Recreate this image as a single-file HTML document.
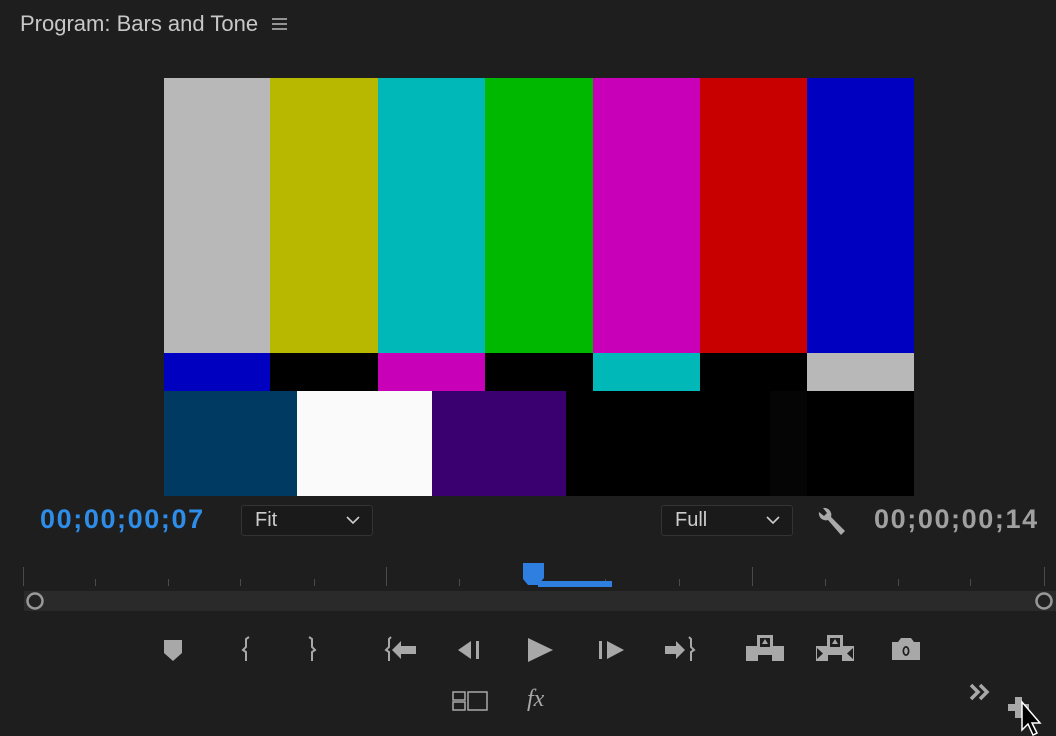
<!DOCTYPE html>
<html><head><style>
body{margin:0;width:1056px;height:736px;background:#1e1e1e;overflow:hidden;position:relative;font-family:"Liberation Sans",sans-serif}
.a{position:absolute}
.title{left:20px;top:11px;color:#c8c8c8;font-size:22px}
.tc{font-family:"Liberation Sans Narrow","Liberation Sans",sans-serif;font-weight:bold;font-size:27px;top:504px;letter-spacing:1.6px}
.dd{top:505px;height:31px;border:1px solid #333;background:#1a1a1a;border-radius:3px;color:#ccc;font-size:20px;box-sizing:border-box;padding:3px 0 0 13px}
.tk{background:#4a4a4a;width:1px}
svg{position:absolute}
</style></head><body>
<div class="a title">Program: Bars and Tone</div>
<svg style="left:271px;top:17px" width="18" height="14"><path d="M1 2H16M1 7H16M1 12H16" stroke="#bbb" stroke-width="1.6"/></svg>

<div class="a" style="left:164px;top:78px;width:750px;height:418px;background:#000">
<div class="a" style="left:0;top:0;width:106px;height:275px;background:#b8b8b8"></div>
<div class="a" style="left:106px;top:0;width:108px;height:275px;background:#b8b800"></div>
<div class="a" style="left:214px;top:0;width:107px;height:275px;background:#00b8b8"></div>
<div class="a" style="left:321px;top:0;width:108px;height:275px;background:#00b800"></div>
<div class="a" style="left:429px;top:0;width:107px;height:275px;background:#c800b8"></div>
<div class="a" style="left:536px;top:0;width:107px;height:275px;background:#c80000"></div>
<div class="a" style="left:643px;top:0;width:107px;height:275px;background:#0000c0"></div>
<div class="a" style="left:0;top:275px;width:106px;height:38px;background:#0000c0"></div>
<div class="a" style="left:214px;top:275px;width:107px;height:38px;background:#c800b8"></div>
<div class="a" style="left:429px;top:275px;width:107px;height:38px;background:#00b8b8"></div>
<div class="a" style="left:643px;top:275px;width:107px;height:38px;background:#b8b8b8"></div>
<div class="a" style="left:0;top:313px;width:133px;height:105px;background:#003a62"></div>
<div class="a" style="left:133px;top:313px;width:135px;height:105px;background:#fafafa"></div>
<div class="a" style="left:268px;top:313px;width:134px;height:105px;background:#3a0070"></div>
<div class="a" style="left:606px;top:313px;width:37px;height:105px;background:#050505"></div>
</div>

<div class="a tc" style="left:40px;color:#2e8de8">00;00;00;07</div>
<div class="a dd" style="left:241px;width:132px">Fit</div>
<svg style="left:346px;top:516px" width="14" height="9"><path d="M1 1L7 7L13 1" stroke="#ccc" stroke-width="1.6" fill="none"/></svg>
<div class="a dd" style="left:661px;width:132px">Full</div>
<svg style="left:766px;top:516px" width="14" height="9"><path d="M1 1L7 7L13 1" stroke="#ccc" stroke-width="1.6" fill="none"/></svg>
<svg style="left:816px;top:505px" width="32" height="32"><path d="M3 7 A7 7 0 0 0 12 15 L25 30 L29 26 L15 12 A7 7 0 0 0 7 3 L11 8 L8 11 Z" fill="#aaa"/></svg>
<div class="a tc" style="left:874px;color:#a0a0a0">00;00;00;14</div>

<div class="a tk" style="left:23px;top:567px;height:19px"></div>
<div class="a tk" style="left:386px;top:567px;height:19px"></div>
<div class="a tk" style="left:752px;top:567px;height:19px"></div>
<div class="a tk" style="left:1044px;top:567px;height:19px"></div>
<div class="a tk" style="left:95px;top:579px;height:7px"></div>
<div class="a tk" style="left:168px;top:579px;height:7px"></div>
<div class="a tk" style="left:240px;top:579px;height:7px"></div>
<div class="a tk" style="left:314px;top:579px;height:7px"></div>
<div class="a tk" style="left:459px;top:579px;height:7px"></div>
<div class="a tk" style="left:605px;top:579px;height:7px"></div>
<div class="a tk" style="left:679px;top:579px;height:7px"></div>
<div class="a tk" style="left:825px;top:579px;height:7px"></div>
<div class="a tk" style="left:898px;top:579px;height:7px"></div>
<div class="a tk" style="left:970px;top:579px;height:7px"></div>
<svg style="left:520px;top:561px" width="96" height="28"><path d="M3 2H24V17L18 24H8L3 18Z" fill="#2e7fe0"/><rect x="18" y="20" width="74" height="6" fill="#2e7fe0"/></svg>

<div class="a" style="left:24px;top:591px;width:1032px;height:20px;background:#2a2a2a"></div>
<svg style="left:25px;top:591px" width="22" height="22"><circle cx="10" cy="10" r="7.5" stroke="#999" stroke-width="2.5" fill="#222"/></svg>
<svg style="left:1034px;top:591px" width="22" height="22"><circle cx="10" cy="10" r="7.5" stroke="#999" stroke-width="2.5" fill="#222"/></svg>

<svg style="left:0;top:630px" width="1056" height="106" fill="#a8a8a8" stroke="none">
<path d="M164 10H182V23L173 31L164 23Z"/>
<path d="M249 7L246 9V17L243 20L246 22V31" stroke="#a8a8a8" stroke-width="2" fill="none"/>
<path d="M309 7L312 9V17L315 20L312 22V31" stroke="#a8a8a8" stroke-width="2" fill="none"/>
<path d="M391 7L389 9V17L386 20L389 22V31" stroke="#a8a8a8" stroke-width="2" fill="none"/>
<path d="M392 20L401 11V16H416V24H401V29Z"/>
<path d="M458 20L471 11V29Z"/><rect x="476" y="11" width="3" height="18"/>
<path d="M528 8L553 20L528 32Z"/>
<rect x="599" y="11" width="3" height="18"/><path d="M607 11L624 20L607 29Z"/>
<path d="M665 16H676V11L685 20L676 29V24H665Z"/>
<path d="M689 7L691 9V17L694 20L691 22V31" stroke="#a8a8a8" stroke-width="2" fill="none"/>
<path d="M757 5H773V16H784V31H772V25H758V31H746V16H757Z"/><rect x="760" y="8" width="10" height="9" fill="#1e1e1e"/><path d="M765 9L768 14H762Z"/>
<path d="M827 5H843V16H854V31H842V25H828V31H816V16H827Z"/><rect x="830" y="8" width="10" height="9" fill="#1e1e1e"/><path d="M835 9L838 14H832Z"/><path d="M817 18L823 23.5L817 29Z M853 18L847 23.5L853 29Z" fill="#1e1e1e"/>
<path d="M892 12H898L901 8H911L914 12H920V30H892Z"/><ellipse cx="906" cy="21" rx="3.5" ry="5" fill="#1e1e1e"/><ellipse cx="906" cy="21" rx="1.8" ry="3.2"/>
<path d="M453 62H465V70H453Z M453 72H465V80H453Z M468 62H487V80H468Z" stroke="#a8a8a8" stroke-width="1.5" fill="none"/>
<path d="M971 55L978 62L971 69 M980 55L987 62L980 69" stroke="#a8a8a8" stroke-width="3.5" fill="none"/>
<path d="M1015 67H1022V74H1029V81H1022V88H1015V81H1008V74H1015Z"/>
<path d="M1022 72V100L1028 94L1033 105L1037 103L1032 93H1040Z" fill="#000" stroke="#fff" stroke-width="1.5"/>
</svg>
<div class="a" style="left:527px;top:686px;color:#a8a8a8;font-family:'Liberation Serif',serif;font-style:italic;font-size:24px">fx</div>
</body></html>
